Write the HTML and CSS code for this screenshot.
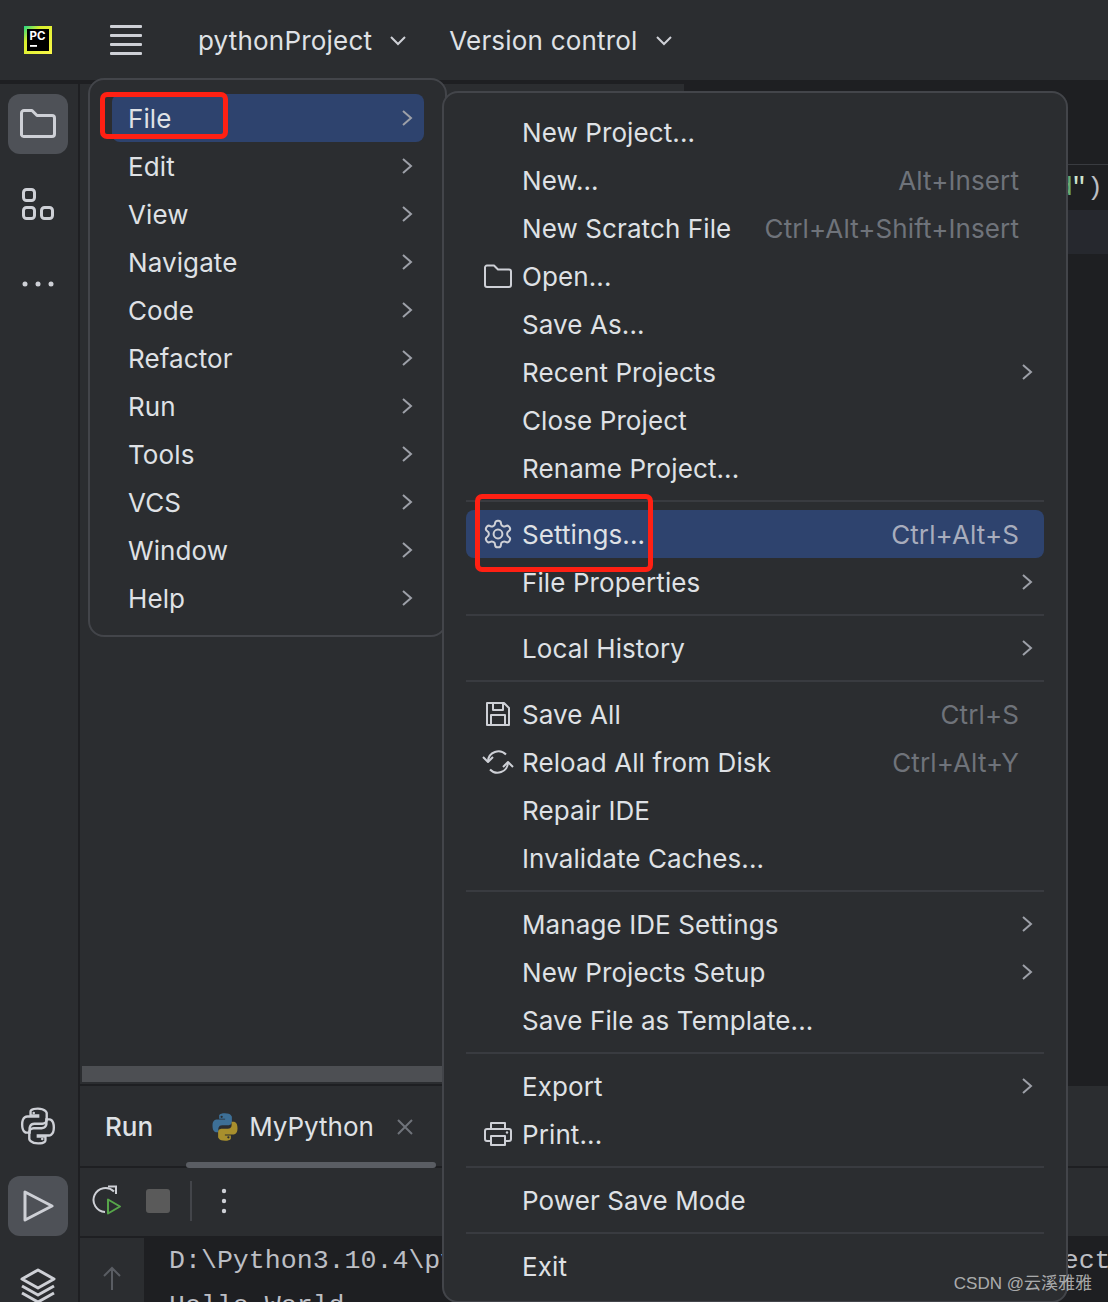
FILE: index.html
```html
<!DOCTYPE html>
<html lang="en">
<head>
<meta charset="utf-8">
<title>pythonProject</title>
<link rel="stylesheet" href="styles.css">
</head>
<body>
<svg class="defs" width="0" height="0" aria-hidden="true">
  <symbol id="chev" viewBox="0 0 12 18"><path d="M2 2l8 7-8 7" fill="none" stroke="currentColor" stroke-width="2"/></symbol>
  <symbol id="py" viewBox="0 0 24 24"><path d="M11.9 1C7 1 7.3 3 7.3 3v2.3h4.8V6H5.4S2 5.6 2 11s2.9 5.2 2.9 5.2h1.8v-2.6s-.1-3 3-3h5s2.8 0 2.8-2.8V3.8S17 1 11.900 1z"/></symbol>
</svg>
<div class="app">
  <header class="topbar">
    <svg class="logo" width="28" height="28" viewBox="0 0 28 28">
      <defs><linearGradient id="lg" x1="0" y1="0" x2="1" y2="1"><stop offset="0" stop-color="#21d789"/><stop offset=".3" stop-color="#d8ee2c"/><stop offset="1" stop-color="#fcf84a"/></linearGradient></defs>
      <rect width="28" height="28" fill="url(#lg)"/>
      <rect x="3" y="3" width="22" height="22" fill="#000"/>
      <text x="5.500" y="13.500" class="logo-text">PC</text>
      <rect x="6" y="19" width="7" height="1.800" fill="#fff"/>
    </svg>
    <div class="burger"><i></i><i></i><i></i><i></i></div>
    <div class="top-item top-project">pythonProject<svg class="caret" width="16" height="10" viewBox="0 0 16 10"><path d="M1 1l7 7 7-7" fill="none" stroke="currentColor" stroke-width="2"/></svg></div>
    <div class="top-item top-vcs">Version control<svg class="caret" width="16" height="10" viewBox="0 0 16 10"><path d="M1 1l7 7 7-7" fill="none" stroke="currentColor" stroke-width="2"/></svg></div>
  </header>

  <div class="body">
    <nav class="sidebar">
      <div class="side-btn active"><svg width="36" height="30" viewBox="0 0 36 30"><path class="ln3" d="M1.500 4a2.500 2.500 0 0 1 2.500-2.500h8l5 5h15a2.500 2.500 0 0 1 2.500 2.500v16a2.500 2.500 0 0 1-2.500 2.500H4A2.500 2.500 0 0 1 1.500 26z"/></svg></div>
      <div class="side-btn"><svg width="32" height="32" viewBox="0 0 32 32"><g class="ln3"><rect x="1.500" y="1.500" width="11" height="11" rx="3"/><rect x="1.500" y="19.500" width="11" height="11" rx="3"/><rect x="19.500" y="19.500" width="11" height="11" rx="3"/></g></svg></div>
      <div class="side-btn"><svg width="32" height="6" viewBox="0 0 32 6"><g fill="#ced0d6"><circle cx="3" cy="3" r="2.500"/><circle cx="16" cy="3" r="2.500"/><circle cx="29" cy="3" r="2.500"/></g></svg></div>
      <div class="side-btn side-low"><svg width="38" height="38" viewBox="0 0 24 24"><g class="ln15"><use href="#py"/><use href="#py" transform="rotate(180 12 12)"/></g><circle cx="9.300" cy="3.800" r=".8" fill="#ced0d6"/><circle cx="14.700" cy="20.200" r=".8" fill="#ced0d6"/></svg></div>
      <div class="side-btn active"><svg width="32" height="34" viewBox="0 0 32 34"><path class="ln3" d="M3 3v28l27-14z"/></svg></div>
      <div class="side-btn"><svg width="36" height="36" viewBox="0 0 36 36"><g class="ln3"><path d="M18 2L34 11 18 20 2 11z"/><path d="M2 18l16 9 16-9"/><path d="M2 25l16 9 16-9"/></g></svg></div>
    </nav>

    <main class="workspace">
      <div class="upper">
        <section class="project"><div class="h-scroll"></div></section>
        <section class="editor">
          <div class="editor-tabs"></div>
          <div class="code-line"><span class="str">print("Hello World</span><span class="str-end">"</span><span>)</span></div>
          <div class="caret-line"></div>
        </section>
      </div>
      <section class="run">
        <div class="run-tabs">
          <span class="run-title">Run</span>
          <div class="run-tab">
            <svg width="30" height="30" viewBox="0 0 24 24"><use href="#py" fill="#3d6f96"/><use href="#py" fill="#a88f2d" transform="rotate(180 12 12)"/><circle cx="9.300" cy="3.800" r=".9" fill="#2b2d30"/><circle cx="14.700" cy="20.200" r=".9" fill="#2b2d30"/></svg>
            <span>MyPython</span>
            <svg class="tab-x" width="16" height="16" viewBox="0 0 16 16"><path d="M1 1l14 14M15 1L1 15" stroke="#6f737a" stroke-width="2"/></svg>
            <i class="tab-line"></i>
          </div>
        </div>
        <div class="run-tools">
          <svg width="30" height="32" viewBox="0 0 30 32"><path d="M22 6.500A12 12 0 1 0 13 27" fill="none" stroke="#ced0d6" stroke-width="2"/><path d="M16 1.500h8v7.500" fill="none" stroke="#ced0d6" stroke-width="2"/><path d="M16 14.500v14l12-7z" fill="#2b2d30" stroke="#57a64a" stroke-width="2" stroke-linejoin="round"/></svg>
          <i class="stop"></i>
          <i class="tool-sep"></i>
          <svg class="kebab" width="6" height="26" viewBox="0 0 6 26"><g fill="#ced0d6"><circle cx="3" cy="3" r="2.200"/><circle cx="3" cy="13" r="2.200"/><circle cx="3" cy="23" r="2.200"/></g></svg>
        </div>
        <div class="console">
          <div class="gutter"><svg width="18" height="24" viewBox="0 0 18 24"><path d="M9 24V2M1 10l8-8 8 8" fill="none" stroke="#5a5d63" stroke-width="2"/></svg></div>
          <pre class="output">D:\Python3.10.4\python.exe C:\Users\Admin\Py3\pythonProject\main.py
Hello World</pre>
        </div>
      </section>
    </main>
  </div>

  <div class="popup main-menu">
    <div class="row sel"><span>File</span><svg class="chev"><use href="#chev"/></svg></div>
    <div class="row"><span>Edit</span><svg class="chev"><use href="#chev"/></svg></div>
    <div class="row"><span>View</span><svg class="chev"><use href="#chev"/></svg></div>
    <div class="row"><span>Navigate</span><svg class="chev"><use href="#chev"/></svg></div>
    <div class="row"><span>Code</span><svg class="chev"><use href="#chev"/></svg></div>
    <div class="row"><span>Refactor</span><svg class="chev"><use href="#chev"/></svg></div>
    <div class="row"><span>Run</span><svg class="chev"><use href="#chev"/></svg></div>
    <div class="row"><span>Tools</span><svg class="chev"><use href="#chev"/></svg></div>
    <div class="row"><span>VCS</span><svg class="chev"><use href="#chev"/></svg></div>
    <div class="row"><span>Window</span><svg class="chev"><use href="#chev"/></svg></div>
    <div class="row"><span>Help</span><svg class="chev"><use href="#chev"/></svg></div>
  </div>

  <div class="popup sub-menu">
    <div class="row"><span>New Project...</span></div>
    <div class="row"><span>New...</span><kbd>Alt+Insert</kbd></div>
    <div class="row"><span>New Scratch File</span><kbd>Ctrl+Alt+Shift+Insert</kbd></div>
    <div class="row"><svg class="ico" width="28" height="24" viewBox="0 0 28 24"><path class="ln2" d="M1 3.500a2 2 0 0 1 2-2h7l4 4h11a2 2 0 0 1 2 2V21a2 2 0 0 1-2 2H3a2 2 0 0 1-2-2z"/></svg><span>Open...</span></div>
    <div class="row"><span>Save As...</span></div>
    <div class="row"><span>Recent Projects</span><svg class="chev"><use href="#chev"/></svg></div>
    <div class="row"><span>Close Project</span></div>
    <div class="row"><span>Rename Project...</span></div>
    <hr>
    <div class="row sel"><svg class="ico" width="32" height="32" viewBox="0 0 24 24"><g class="ln15"><path d="M12.220 2h-.44a2 2 0 0 0-2 2v.18a2 2 0 0 1-1 1.730l-.43.25a2 2 0 0 1-2 0l-.15-.08a2 2 0 0 0-2.730.73l-.22.38a2 2 0 0 0 .73 2.730l.15.1a2 2 0 0 1 1 1.720v.51a2 2 0 0 1-1 1.740l-.15.09a2 2 0 0 0-.73 2.730l.22.38a2 2 0 0 0 2.730.73l.15-.08a2 2 0 0 1 2 0l.43.25a2 2 0 0 1 1 1.730V20a2 2 0 0 0 2 2h.44a2 2 0 0 0 2-2v-.18a2 2 0 0 1 1-1.730l.43-.25a2 2 0 0 1 2 0l.15.08a2 2 0 0 0 2.730-.73l.22-.39a2 2 0 0 0-.73-2.730l-.15-.08a2 2 0 0 1-1-1.740v-.5a2 2 0 0 1 1-1.740l.15-.09a2 2 0 0 0 .73-2.730l-.22-.38a2 2 0 0 0-2.730-.73l-.15.08a2 2 0 0 1-2 0l-.43-.25a2 2 0 0 1-1-1.730V4a2 2 0 0 0-2-2z"/><circle cx="12" cy="12" r="3.300"/></g></svg><span>Settings...</span><kbd>Ctrl+Alt+S</kbd></div>
    <div class="row"><span>File Properties</span><svg class="chev"><use href="#chev"/></svg></div>
    <hr>
    <div class="row"><span>Local History</span><svg class="chev"><use href="#chev"/></svg></div>
    <hr>
    <div class="row"><svg class="ico" width="24" height="24" viewBox="0 0 24 24"><path class="ln2" d="M1 1h17l5 5v17H1zM7 1v7h10V1M5 23v-10h14v10"/></svg><span>Save All</span><kbd>Ctrl+S</kbd></div>
    <div class="row"><svg class="ico" width="32" height="26" viewBox="0 0 32 26"><g class="ln2"><path d="M6 12A10.500 10.500 0 0 1 24 5.500"/><path d="M26 14A10.500 10.500 0 0 1 8 20.500"/><path d="M1 8l5 5 5-5"/><path d="M21 18l5-5 5 5"/></g></svg><span>Reload All from Disk</span><kbd>Ctrl+Alt+Y</kbd></div>
    <div class="row"><span>Repair IDE</span></div>
    <div class="row"><span>Invalidate Caches...</span></div>
    <hr>
    <div class="row"><span>Manage IDE Settings</span><svg class="chev"><use href="#chev"/></svg></div>
    <div class="row"><span>New Projects Setup</span><svg class="chev"><use href="#chev"/></svg></div>
    <div class="row"><span>Save File as Template...</span></div>
    <hr>
    <div class="row"><span>Export</span><svg class="chev"><use href="#chev"/></svg></div>
    <div class="row"><svg class="ico" width="28" height="24" viewBox="0 0 28 24"><g class="ln2"><path d="M7 7V1h14v6"/><path d="M7 19H3a2 2 0 0 1-2-2V9a2 2 0 0 1 2-2h22a2 2 0 0 1 2 2v8a2 2 0 0 1-2 2h-4"/><path d="M7 14h14v9H7z"/></g><circle cx="23" cy="10.500" r="1.200" fill="#ced0d6"/></svg><span>Print...</span></div>
    <hr>
    <div class="row"><span>Power Save Mode</span></div>
    <hr>
    <div class="row"><span>Exit</span></div>
  </div>

  <div class="mark mark-file"></div>
  <div class="mark mark-settings"></div>
  <div class="watermark">CSDN @云溪雅雅</div>
</div>
</body>
</html>
```

FILE: styles.css
```css
* { box-sizing: border-box; }
html, body { margin: 0; padding: 0; background: #2b2d30; }
.defs { position: absolute; }
.app {
  position: relative;
  width: 1108px;
  height: 1302px;
  overflow: hidden;
  display: flex;
  flex-direction: column;
  background: #2b2d30;
  color: #dfe1e5;
  font: 26px/48px Inter, "Noto Sans", sans-serif;
}
.ln3 { fill: none; stroke: #ced0d6; stroke-width: 3; stroke-linejoin: round; }
.ln2 { fill: none; stroke: #ced0d6; stroke-width: 2; stroke-linejoin: round; }
.ln15 { fill: none; stroke: #ced0d6; stroke-width: 1.500; }

/* top bar */
.topbar {
  flex: none;
  height: 84px;
  display: flex;
  align-items: center;
  padding: 0 0 0 24px;
  border-bottom: 4px solid #1e1f22;
}
.logo { flex: none; }
.logo-text { font: 700 11.500px Inter, sans-serif; fill: #fff; }
.burger { width: 32px; height: 30px; margin-left: 58px; display: flex; flex-direction: column; justify-content: space-between; }
.burger i { display: block; height: 3px; background: #ced0d6; border-radius: 1px; }
.top-item { display: flex; align-items: center; color: #dfe1e5; letter-spacing: .2px; padding-top: 2px; }
.top-project { margin-left: 56px; }
.top-vcs { margin-left: 43px; }
.caret { margin-left: 18px; color: #ced0d6; }

.body { flex: 1; min-height: 0; display: flex; }

/* left tool strip */
.sidebar {
  flex: none;
  width: 80px;
  border-right: 2px solid #1e1f22;
  padding: 10px 0 0 8px;
  display: flex;
  flex-direction: column;
  gap: 20px;
}
.side-btn { flex: none; width: 60px; height: 60px; border-radius: 12px; display: flex; align-items: center; justify-content: center; }
.side-btn.active { background: #4e5157; }
.side-low { margin-top: 762px; }

/* main area */
.workspace { flex: 1; min-width: 0; display: flex; flex-direction: column; }
.upper { flex: none; height: 1000px; display: flex; }
.project { flex: none; width: 604px; display: flex; flex-direction: column; justify-content: flex-end; padding: 0 0 2px 2px; }
.h-scroll { height: 16px; background: #4d4f53; }
.editor { flex: 1; background: #1e1f22; }
.editor-tabs { height: 81px; border-bottom: 1px solid #393b40; }
.code-line { height: 45px; padding-right: 5px; display: flex; justify-content: flex-end; font: 26.600px/46px "Liberation Mono", monospace; color: #bcbec4; white-space: nowrap; }
.code-line .str { color: #6aab73; margin-right: -2px; }
.code-line .str-end { color: #cfe3cf; }
.caret-line { height: 44px; background: #26282e; }

/* run panel */
.run { flex: 1; min-height: 0; display: flex; flex-direction: column; border-top: 2px solid #1e1f22; }
.run-tabs { flex: none; height: 82px; padding: 2px 0 0 25px; border-bottom: 2px solid #1e1f22; display: flex; align-items: center; }
.run-title { font-weight: 500; }
.run-tab { position: relative; display: flex; align-items: center; gap: 9px; margin-left: 57px; height: 48px; }
.tab-x { margin-left: 14px; }
.tab-line { position: absolute; left: -24px; top: 59px; width: 250px; height: 6px; border-radius: 3px; background: #5a5d63; }
.run-tools { flex: none; height: 70px; padding: 0 0 2px 12px; border-bottom: 2px solid #1e1f22; display: flex; align-items: center; }
.stop { width: 24px; height: 24px; margin-left: 24px; border-radius: 3px; background: #5a5a5a; }
.tool-sep { width: 2px; height: 40px; margin-left: 20px; background: #43454a; }
.kebab { margin-left: 29px; }
.console { flex: 1; min-height: 0; display: flex; background: #1e1f22; }
.gutter { flex: none; width: 64px; background: #2b2d30; display: flex; justify-content: center; padding-top: 28px; }
.output { margin: 0; padding: 1px 0 0 25px; font: 26.600px/45px "Liberation Mono", monospace; color: #bcbec4; white-space: pre; }

/* popups */
.popup {
  position: absolute;
  background: #2b2d30;
  border: 2px solid #43454a;
  border-radius: 16px;
}
.main-menu { left: 88px; top: 78px; width: 359px; height: 559px; padding: 14px 21px 0 22px; }
.sub-menu { left: 442px; top: 91px; width: 626px; height: 1212px; padding: 15px 22px 0 22px; }
.row { position: relative; height: 48px; display: flex; align-items: center; padding: 2px 25px 0 16px; border-radius: 8px; color: #dfe1e5; white-space: nowrap; letter-spacing: .1px; }
.sub-menu .row { padding-left: 56px; }
.row.sel { background: #2e436e; }
.row span { flex: 1; }
.row kbd { font: inherit; color: #6f737a; }
.sel kbd { color: #a8adbd; }
.chev { position: absolute; right: 11px; top: 15px; width: 12px; height: 18px; color: #9da0a8; }
.ico { position: absolute; left: 32px; top: 50%; transform: translate(-50%, -50%); }
.popup hr { height: 2px; margin: 8px 0; border: 0; background: #393b40; }

/* annotations */
.mark { position: absolute; border: 5px solid #ff2013; border-radius: 7px; }
.mark-file { left: 100px; top: 92px; width: 128px; height: 47px; }
.mark-settings { left: 475px; top: 494px; width: 178px; height: 78px; }
.watermark {
  position: absolute;
  right: 16px;
  top: 1272px;
  font: 17px/24px "Liberation Sans", "Noto Sans CJK SC", sans-serif;
  color: rgba(255, 255, 255, .62);
}
```
